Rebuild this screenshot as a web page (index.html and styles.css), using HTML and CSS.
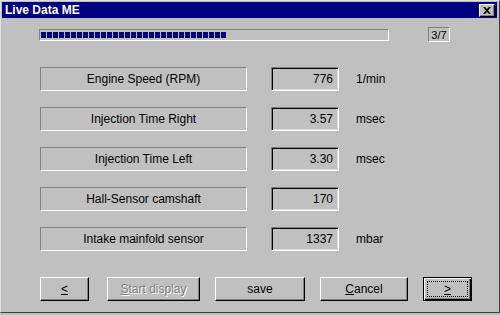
FILE: index.html
```html
<!DOCTYPE html>
<html>
<head>
<meta charset="utf-8">
<link rel="stylesheet" href="styles.css">
</head>
<body>
<div class="window">
  <div class="titlebar">
    <span class="title">Live Data ME</span>
    <span class="close"><svg width="8" height="7" viewBox="0 0 8 7"><path d="M0 0h2l2 2 2-2h2L5 3.5 8 7H6L4 5 2 7H0l3-3.5z" fill="#000"/></svg></span>
  </div>
  <div class="content">
    <div class="progress-row">
      <div class="progress"><div class="fill"></div></div>
      <div class="counter">3/7</div>
    </div>
    <div class="rows">
      <div class="row"><div class="label">Engine Speed (RPM)</div><div class="value">776</div><div class="unit">1/min</div></div>
      <div class="row"><div class="label">Injection Time Right</div><div class="value">3.57</div><div class="unit">msec</div></div>
      <div class="row"><div class="label">Injection Time Left</div><div class="value">3.30</div><div class="unit">msec</div></div>
      <div class="row"><div class="label">Hall-Sensor camshaft</div><div class="value">170</div><div class="unit"></div></div>
      <div class="row"><div class="label">Intake mainfold sensor</div><div class="value">1337</div><div class="unit">mbar</div></div>
    </div>
    <div class="buttons">
      <div class="btn b-prev"><u>&lt;</u></div>
      <div class="btn b-start disabled"><u>S</u>tart display</div>
      <div class="btn b-save">save</div>
      <div class="btn b-cancel"><u>C</u>ancel</div>
      <div class="btn b-next default"><span class="focus"><u>&gt;</u></span></div>
    </div>
  </div>
</div>
</body>
</html>
```
FILE: styles.css
```css
* { box-sizing: border-box; }
html, body { margin: 0; padding: 0; }
body {
  width: 500px; height: 315px; overflow: hidden;
  background: #c0c0c0;
  font-family: "Liberation Sans", Arial, sans-serif;
  font-size: 12px; color: #000;
}
.window {
  width: 500px; height: 313px;
  background: #c0c0c0;
  border-top: 1px solid #dfdfdf;
  border-left: 1px solid #dfdfdf;
  border-right: 1px solid #404040;
  border-bottom: 1px solid #404040;
  padding: 1px 2px 0 1px;
  display: flex; flex-direction: column;
}
.titlebar {
  height: 16px;
  background: #000080;
  display: flex; align-items: center; justify-content: space-between;
  padding: 0 2px 0 3px;
}
.title { color: #fff; font-weight: bold; font-size: 12px; }
.close {
  width: 16px; height: 13px;
  background: #c0c0c0;
  border-top: 1px solid #fff; border-left: 1px solid #fff;
  border-right: 1px solid #000; border-bottom: 1px solid #000;
  box-shadow: inset -1px -1px 0 #808080;
  display: flex; align-items: center; justify-content: center;
}
.content { flex: 1; display: flex; flex-direction: column; padding: 0 0 0 38px; }
.progress-row { display: flex; align-items: center; margin-top: 9px; height: 15px; margin-left: -1px; }
.progress {
  width: 350px; height: 12px;
  border-top: 1px solid #808080; border-left: 1px solid #808080;
  border-bottom: 1px solid #fff; border-right: 1px solid #fff;
  padding: 2px 1px;
}
.fill {
  width: 186px; height: 100%;
  background: repeating-linear-gradient(90deg, #000080 0 5px, transparent 5px 6px);
}
.counter {
  margin-left: 39px; width: 22px; height: 15px;
  border-top: 1px solid #808080; border-left: 1px solid #808080;
  border-bottom: 1px solid #fff; border-right: 1px solid #fff;
  display: flex; align-items: center; justify-content: center;
  font-size: 11px;
}
.rows { display: flex; flex-direction: column; gap: 16px; margin-top: 25px; }
.row { display: flex; align-items: center; height: 24px; }
.label {
  width: 207px; height: 24px;
  border-top: 1px solid #808080; border-left: 1px solid #808080;
  border-bottom: 1px solid #fff; border-right: 1px solid #fff;
  display: flex; align-items: center; justify-content: center;
}
.value {
  margin-left: 24px; width: 68px; height: 24px;
  border-top: 1px solid #808080; border-left: 1px solid #808080;
  border-bottom: 1px solid #fff; border-right: 1px solid #fff;
  box-shadow: inset 1px 1px 0 #000, inset -1px -1px 0 #dfdfdf;
  display: flex; align-items: center; justify-content: flex-end;
  padding-right: 5px;
}
.unit { margin-left: 17px; }
.buttons { display: flex; margin-top: 26px; }
.btn {
  height: 24px;
  background: #c0c0c0;
  border-top: 1px solid #fff; border-left: 1px solid #fff;
  border-right: 1px solid #000; border-bottom: 1px solid #000;
  box-shadow: inset -1px -1px 0 #808080;
  display: flex; align-items: center; justify-content: center;
}
.b-prev { width: 49px; }
.b-start { width: 93px; margin-left: 18px; }
.b-save { width: 90px; margin-left: 15px; }
.b-cancel { width: 88px; margin-left: 15px; }
.b-next { width: 49px; margin-left: 15px; }
.disabled { color: #808080; text-shadow: 1px 1px 0 #fff; }
.default {
  border: 1px solid #000;
  box-shadow: inset 1px 1px 0 #fff, inset -1px -1px 0 #000, inset -2px -2px 0 #808080;
  padding: 3px;
}
.focus {
  width: 100%; height: 100%;
  border: 1px dotted #000;
  display: flex; align-items: center; justify-content: center;
}
```
